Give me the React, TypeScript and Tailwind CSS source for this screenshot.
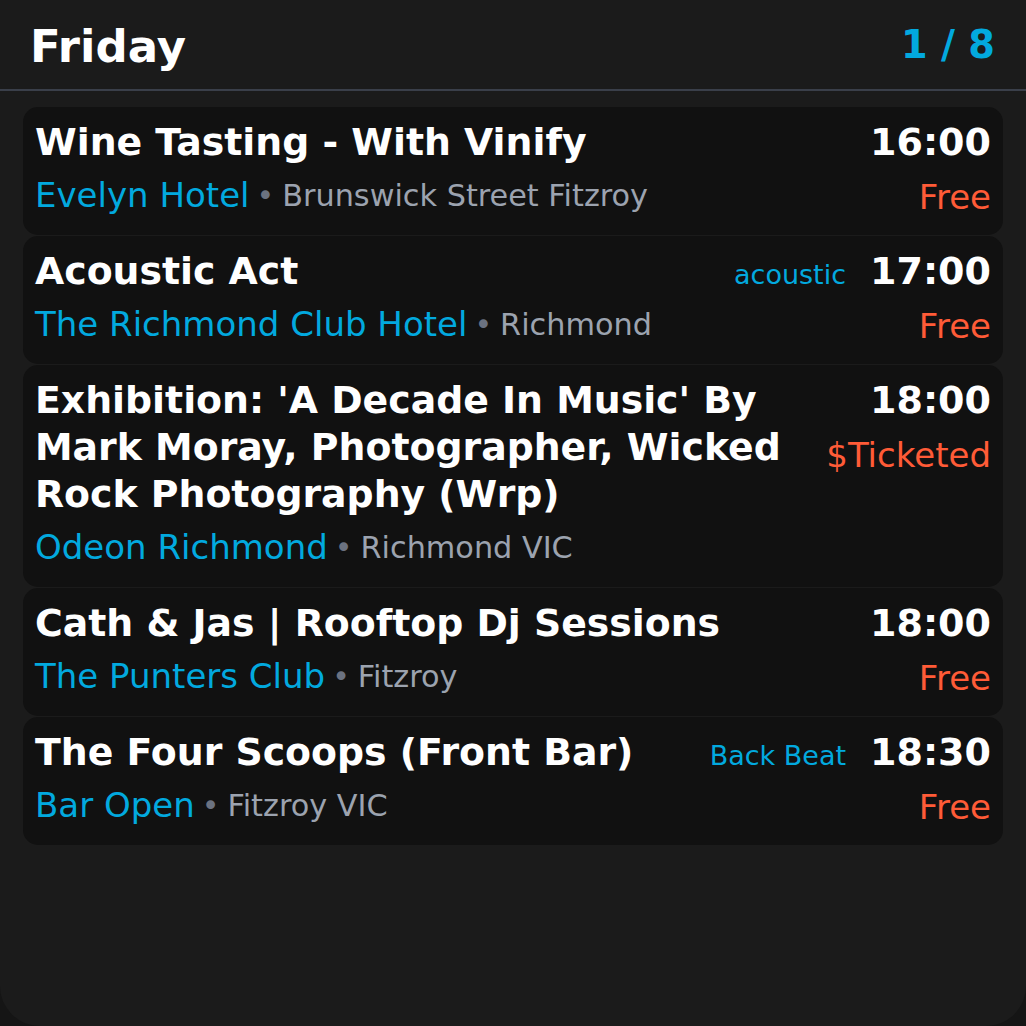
import React from "react";

interface Gig {
  id: number;
  title: string;
  venue: string;
  area: string;
  time: string;
  price: string;
  tag?: string;
}

const GIGS: Gig[] = [
  { id: 1, title: "Wine Tasting - With Vinify", venue: "Evelyn Hotel", area: "Brunswick Street Fitzroy", time: "16:00", price: "Free" },
  { id: 2, title: "Acoustic Act", venue: "The Richmond Club Hotel", area: "Richmond", time: "17:00", price: "Free", tag: "acoustic" },
  {
    id: 3,
    title: "Exhibition: 'A Decade In Music' By Mark Moray, Photographer, Wicked Rock Photography (Wrp)",
    venue: "Odeon Richmond",
    area: "Richmond VIC",
    time: "18:00",
    price: "$Ticketed",
  },
  { id: 4, title: "Cath & Jas | Rooftop Dj Sessions", venue: "The Punters Club", area: "Fitzroy", time: "18:00", price: "Free" },
  { id: 5, title: "The Four Scoops (Front Bar)", venue: "Bar Open", area: "Fitzroy VIC", time: "18:30", price: "Free", tag: "Back Beat" },
];

function GigCard({ gig }: { gig: Gig }) {
  return (
    <div className="flex gap-[22px] rounded-[15px] bg-[#111111] px-[12px] pt-[12px] pb-[17px]">
      {/* left: title + venue */}
      <div className="flex min-w-0 flex-1 flex-col">
        <span className="text-[37.8px] font-bold leading-[47px] text-white">{gig.title}</span>
        <div className="mt-[7px] flex items-center">
          <span className="text-[34px] leading-[45px] text-[#02a9df]">{gig.venue}</span>
          <span className="ml-[7px] text-[30px] leading-[40px] text-[#6b7280]">•</span>
          <span className="ml-[8px] text-[30.3px] leading-[40px] text-[#9ca3af]">{gig.area}</span>
        </div>
      </div>

      {/* right: tag, time, price */}
      <div className="flex shrink-0 flex-col items-end">
        <div className="flex items-baseline gap-[24px]">
          {gig.tag && <span className="text-[27px] leading-[30px] text-[#02a9df]">{gig.tag}</span>}
          <span className="text-[38px] font-bold leading-[47px] text-white">{gig.time}</span>
        </div>
        <span className="mt-[11px] text-[34px] leading-[41px] text-[#ff5b37]">{gig.price}</span>
      </div>
    </div>
  );
}

export default function App() {
  return (
    <div className="h-[1026px] w-[1026px] bg-[#151515] font-['DejaVu_Sans',sans-serif]">
      <div className="flex h-full flex-col rounded-b-[40px] bg-[#1b1b1b]">
        <div className="flex h-[91px] items-center justify-between border-b-2 border-[#3a3f4a] pl-[30px] pr-[31px]">
          <span className="mt-[4px] text-[45px] font-bold leading-[60px] text-white">Friday</span>
          <span className="text-[38.3px] font-bold leading-[47px] text-[#02a9df]">1 / 8</span>
        </div>

        <div className="flex flex-col gap-[1px] px-[23px] pt-[16px]">
          {GIGS.map((gig) => (
            <GigCard key={gig.id} gig={gig} />
          ))}
        </div>
      </div>
    </div>
  );
}
